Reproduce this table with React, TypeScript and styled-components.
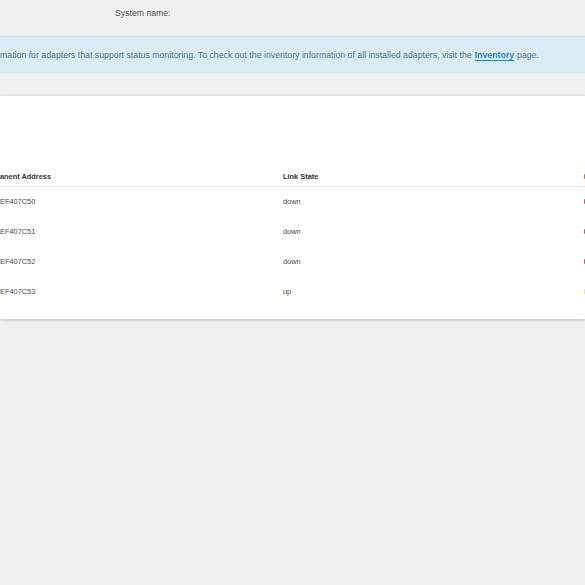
import React from "react";
import styled, { createGlobalStyle } from "styled-components";

const Global = createGlobalStyle`
  html, body { margin: 0; padding: 0; background: #f0f0f2; overflow: hidden; }
  body { font-family: "Liberation Sans", Arial, sans-serif; }
`;

const Page = styled.div`
  width: 585px;
  height: 585px;
  overflow: hidden;
  display: flex;
  flex-direction: column;
`;

const TopBar = styled.div`
  height: 36px;
  display: flex;
  align-items: flex-start;
  padding-left: 115px;
  box-sizing: border-box;
`;

const SysLabel = styled.span`
  font-size: 8.7px;
  color: #505050;
  margin-top: 8px;
`;

const InfoBox = styled.div`
  height: 37px;
  background: #d9ebf5;
  border-top: 1px solid #cde2ef;
  border-bottom: 1px solid #cde2ef;
  box-sizing: border-box;
  display: flex;
  align-items: center;
  font-size: 8.75px;
  color: #4a7795;
  white-space: nowrap;
  padding-top: 1px;
`;

const InfoLink = styled.a`
  color: #1d8ad2;
  font-weight: bold;
  text-decoration: underline;
  text-underline-offset: 2px;
  margin: 0 3px;
`;

const Card = styled.div`
  margin-top: 22px;
  height: 224px;
  background: #fff;
  border-top: 1px solid #e2e2e4;
  box-shadow: 0 1px 3px rgba(0, 0, 0, 0.22);
  box-sizing: border-box;
  padding-top: 70px;
`;

const Row = styled.div<{ $head?: boolean }>`
  display: grid;
  grid-template-columns: 283px 301px 40px;
  height: ${(p) => (p.$head ? "21px" : "30px")};
  padding-bottom: ${(p) => (p.$head ? "0" : "2px")};
  box-sizing: border-box;
  align-items: center;
  font-size: 7.4px;
  color: ${(p) => (p.$head ? "#333" : "#484848")};
  font-weight: ${(p) => (p.$head ? "bold" : "normal")};
  border-bottom: ${(p) => (p.$head ? "1px solid #e6e6e6" : "none")};
  white-space: nowrap;
`;

const Mark = styled.span<{ $color: string }>`
  display: inline-block;
  width: 6px;
  height: 5px;
  background: ${(p) => p.$color};
  border-radius: 1px;
`;

const rows = [
  { addr: "EF407C50", state: "down", mark: "#b0607a" },
  { addr: "EF407C51", state: "down", mark: "#b0607a" },
  { addr: "EF407C52", state: "down", mark: "#b0607a" },
  { addr: "EF407C53", state: "up", mark: "#f3e0a8" },
];

export default function App() {
  return (
    <Page>
      <Global />
      <TopBar>
        <SysLabel>System name:</SysLabel>
      </TopBar>
      <InfoBox>
        mation for adapters that support status monitoring. To check out the inventory information of all installed adapters, visit the
        <InfoLink>Inventory</InfoLink>page.
      </InfoBox>
      <Card>
        <Row $head>
          <span>anent Address</span>
          <span>Link State</span>
          <Mark $color="#cf6a48" />
        </Row>
        {rows.map((r) => (
          <Row key={r.addr}>
            <span>{r.addr}</span>
            <span>{r.state}</span>
            <Mark $color={r.mark} />
          </Row>
        ))}
      </Card>
    </Page>
  );
}
